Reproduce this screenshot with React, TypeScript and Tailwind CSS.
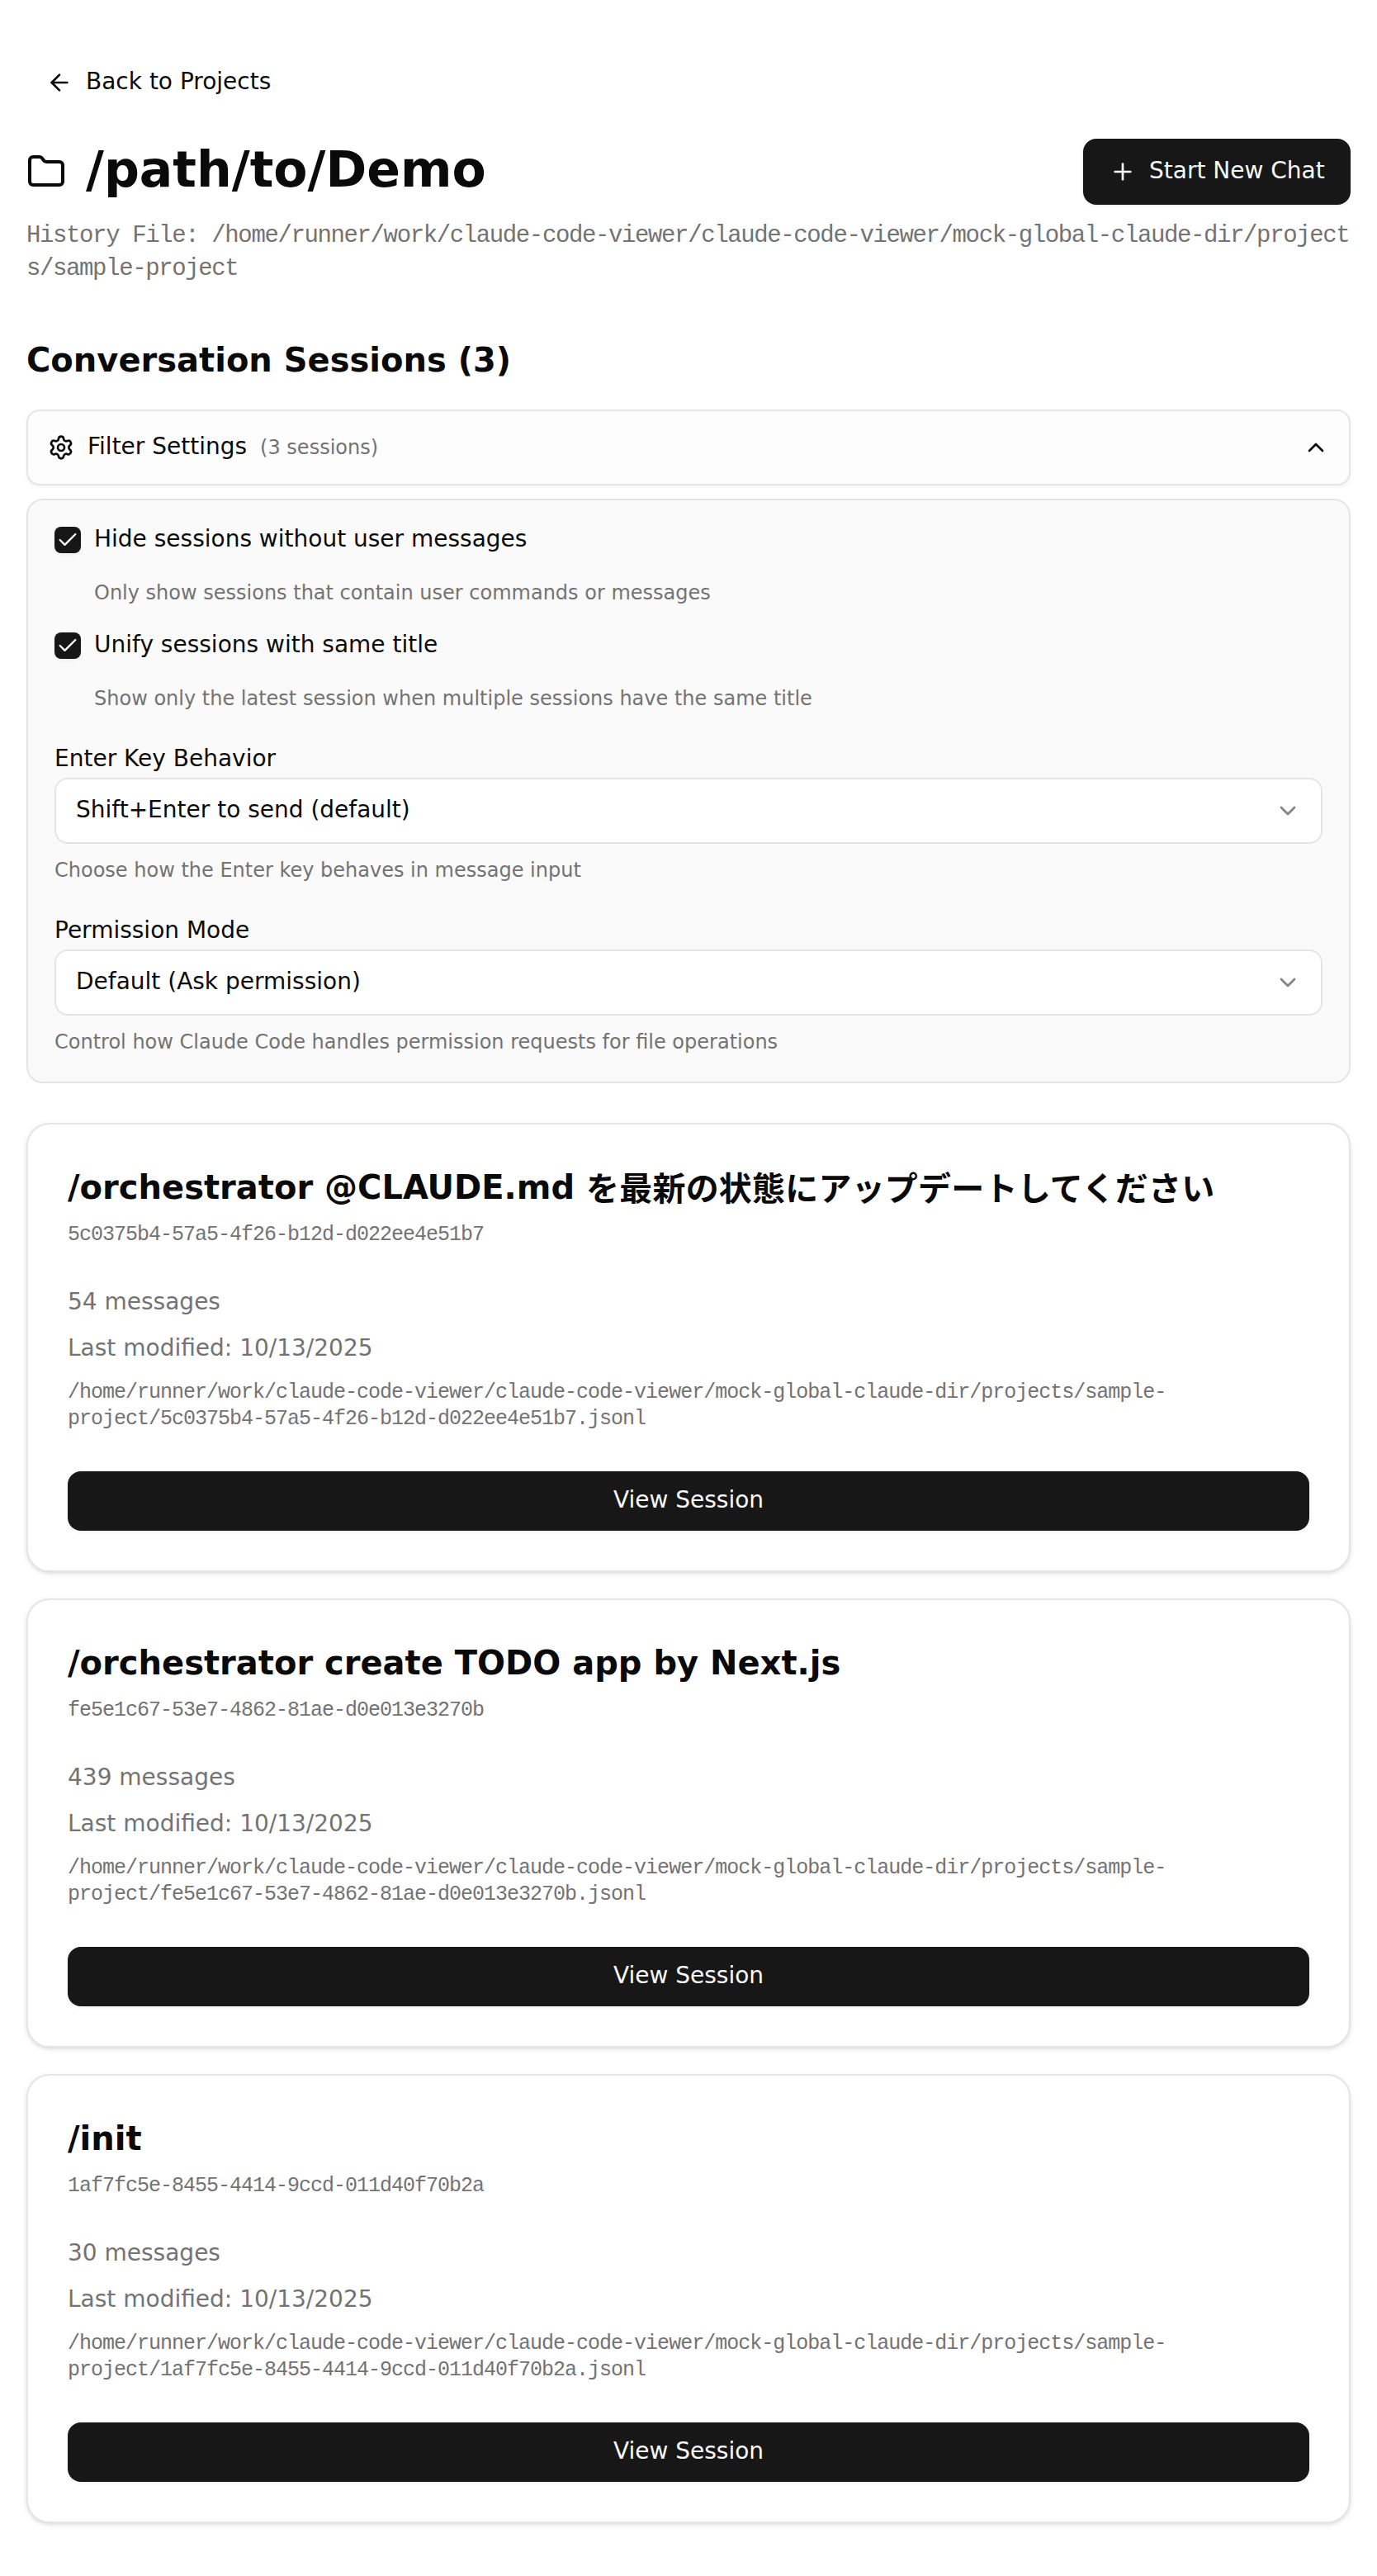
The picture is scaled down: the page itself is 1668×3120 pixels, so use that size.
import type { ReactNode } from "react";
import { ArrowLeft, Check, ChevronDown, ChevronUp, Folder, Plus, Settings } from "lucide-react";

type Session = { id: string; count: number; title: ReactNode };

const sessions: Session[] = [
  {
    title: (
      <>
        /orchestrator @CLAUDE.md{" "}
        <span className="align-[-2px] leading-none tracking-[0.2px]">
          を最新の状態にアップデートしてください
        </span>
      </>
    ),
    id: "5c0375b4-57a5-4f26-b12d-d022ee4e51b7",
    count: 54,
  },
  {
    title: "/orchestrator create TODO app by Next.js",
    id: "fe5e1c67-53e7-4862-81ae-d0e013e3270b",
    count: 439,
  },
  { title: "/init", id: "1af7fc5e-8455-4414-9ccd-011d40f70b2a", count: 30 },
];

const projectDir =
  "/home/runner/work/claude-code-viewer/claude-code-viewer/mock-global-claude-dir/projects/sample-project";

function FilterOption({ label, hint }: { label: string; hint: string }) {
  return (
    <div>
      <div className="flex h-8 items-center gap-4">
        <span className="flex size-8 items-center justify-center rounded-lg bg-neutral-900 text-neutral-50 shadow-[0_2px_4px_0_rgb(0_0_0/0.05)]">
          <Check className="size-7" />
        </span>
        <span className="-mt-px mb-px text-[28px] leading-7">{label}</span>
      </div>
      <p className="mt-8 ml-12 text-[24px] leading-8 text-neutral-500">{hint}</p>
    </div>
  );
}

function SelectField({ label, value, hint }: { label: string; value: string; hint: string }) {
  return (
    <div>
      <p className="-mb-px pt-px text-[28px] leading-[48px]">{label}</p>
      <div className="flex h-20 items-center justify-between rounded-2xl border-2 border-neutral-200 bg-white px-6">
        <span className="-mt-px mb-px text-[28px] leading-10">{value}</span>
        <ChevronDown className="size-8 opacity-50" />
      </div>
      <p className="mt-4 text-[24px] leading-8 text-neutral-500">{hint}</p>
    </div>
  );
}

function SessionCard({ session }: { session: Session }) {
  return (
    <article className="h-[544px] rounded-[28px] border-2 border-neutral-200 bg-white p-12 shadow-[0_2px_6px_0_rgb(0_0_0/0.1),0_2px_4px_-2px_rgb(0_0_0/0.1)]">
      <header className="flex h-[100px] flex-col gap-3">
        <h3 className="h-14 text-[40px] leading-[56px] font-bold">{session.title}</h3>
        <p className="pt-0.5 font-['Liberation_Mono',monospace] text-[25px] leading-8 tracking-[-1px] text-neutral-500">
          {session.id}
        </p>
      </header>
      <div className="mt-12 flex flex-col gap-4 text-[28px] leading-10 text-neutral-500">
        <p className="-mt-px mb-px">{`${session.count} messages`}</p>
        <p className="-mt-px mb-px">Last modified: 10/13/2025</p>
        <p className="mt-px -mb-px font-['Liberation_Mono',monospace] text-[25px] leading-8 tracking-[-1px]">
          {`${projectDir}/${session.id}.jsonl`}
        </p>
      </div>
      <button className="mt-12 flex h-[72px] w-full items-center justify-center rounded-2xl bg-neutral-900 text-neutral-50 shadow-[0_2px_4px_0_rgb(0_0_0/0.05)]">
        <span className="-mt-px mb-px text-[28px] leading-10">View Session</span>
      </button>
    </article>
  );
}

export default function App() {
  return (
    <div className="min-h-[3120px] bg-white px-8 py-16 font-['DejaVu_Sans','Noto_Sans_CJK_JP',sans-serif] text-neutral-950">
      <header className="flex flex-col">
        <a className="flex h-[72px] items-center gap-4 self-start px-6 text-[28px] leading-10">
          <ArrowLeft className="size-8" />
          <span className="-mt-px mb-px">Back to Projects</span>
        </a>
        <div className="mt-8 flex h-20 items-center justify-between">
          <div className="flex items-center gap-6">
            <Folder className="size-12" />
            <h1 className="mb-1.5 text-[60px] leading-[72px] font-bold">/path/to/Demo</h1>
          </div>
          <button className="flex h-20 w-[324px] items-center gap-4 rounded-2xl bg-neutral-900 pl-8 text-[28px] leading-10 whitespace-nowrap text-neutral-50 shadow-[0_2px_4px_0_rgb(0_0_0/0.05)]">
            <Plus className="size-8 shrink-0" />
            <span className="-mt-px mb-px">Start New Chat</span>
          </button>
        </div>
        <p className="mt-[18px] font-['Liberation_Mono',monospace] text-[29px] leading-10 tracking-[-1.38px] break-all text-neutral-500">
          {`History File: ${projectDir}`}
        </p>
      </header>
      <main className="mt-[62px]">
        <h2 className="text-[40px] leading-[56px] font-bold">Conversation Sessions (3)</h2>
        <section className="mt-8">
          <div className="flex h-[92px] items-center rounded-2xl border-2 border-neutral-200 bg-[#fdfdfd] px-6 shadow-[0_2px_4px_0_rgb(0_0_0/0.05)]">
            <Settings className="size-8" />
            <span className="-mt-px mb-px ml-4 text-[28px] leading-10">Filter Settings</span>
            <span className="ml-4 text-[24px] leading-8 text-neutral-500">(3 sessions)</span>
            <ChevronUp className="ml-auto size-8" />
          </div>
          <div className="mt-4 flex h-[708px] flex-col gap-8 rounded-[20px] border-2 border-neutral-200 bg-neutral-50 p-8">
            <FilterOption
              label="Hide sessions without user messages"
              hint="Only show sessions that contain user commands or messages"
            />
            <FilterOption
              label="Unify sessions with same title"
              hint="Show only the latest session when multiple sessions have the same title"
            />
            <SelectField
              label="Enter Key Behavior"
              value="Shift+Enter to send (default)"
              hint="Choose how the Enter key behaves in message input"
            />
            <SelectField
              label="Permission Mode"
              value="Default (Ask permission)"
              hint="Control how Claude Code handles permission requests for file operations"
            />
          </div>
        </section>
        <div className="mt-12 flex flex-col gap-8">
          {sessions.map((s) => (
            <SessionCard key={s.id} session={s} />
          ))}
        </div>
      </main>
    </div>
  );
}
